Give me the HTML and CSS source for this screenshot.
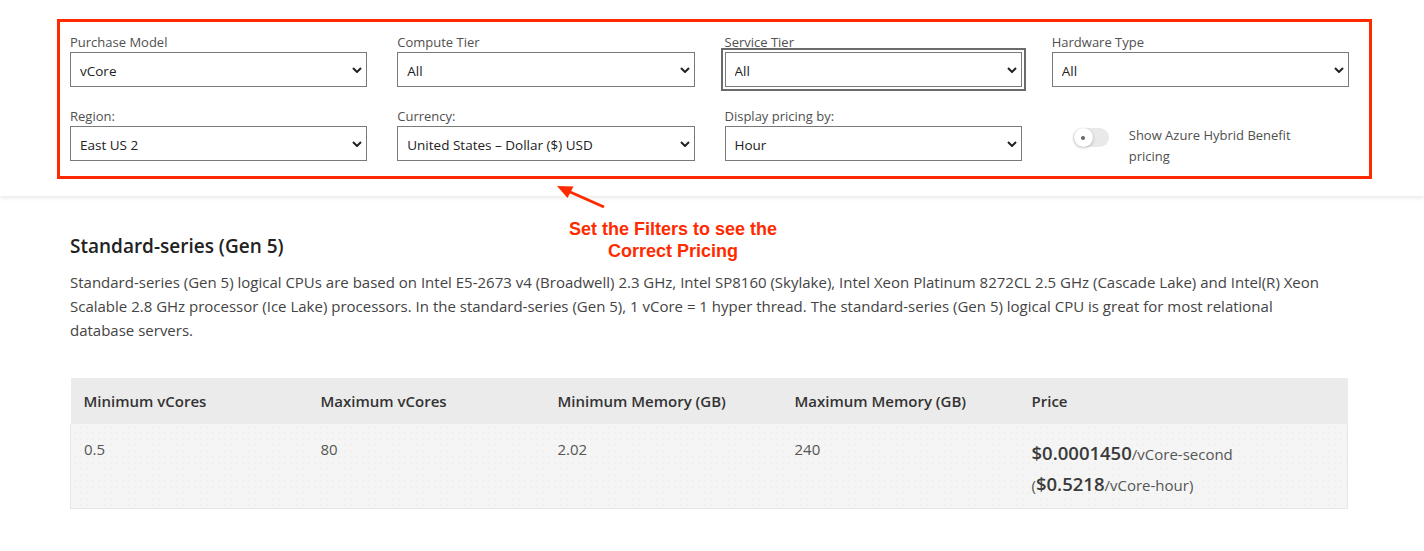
FILE: index.html
```html
<!DOCTYPE html>
<html lang="en">
<head>
  <meta charset="UTF-8" />
  <title>Azure SQL Database pricing</title>
  <link rel="stylesheet" href="styles.css">
</head>
<body>
  <div class="page">

    <!-- filter bar -->
    <div class="filters-bar">
      <div class="filters-frame">
        <div class="filters">
          <div class="field">
            <label>Purchase Model</label>
            <div class="select-wrap">
              <select><option>vCore</option></select>
              <svg class="chev" viewBox="0 0 10 6"><path d="M1 1l4 4 4-4" /></svg>
            </div>
          </div>
          <div class="field">
            <label>Compute Tier</label>
            <div class="select-wrap">
              <select><option>All</option></select>
              <svg class="chev" viewBox="0 0 10 6"><path d="M1 1l4 4 4-4" /></svg>
            </div>
          </div>
          <div class="field">
            <label>Service Tier</label>
            <div class="select-wrap">
              <select class="is-focused"><option>All</option></select>
              <svg class="chev" viewBox="0 0 10 6"><path d="M1 1l4 4 4-4" /></svg>
            </div>
          </div>
          <div class="field">
            <label>Hardware Type</label>
            <div class="select-wrap">
              <select><option>All</option></select>
              <svg class="chev" viewBox="0 0 10 6"><path d="M1 1l4 4 4-4" /></svg>
            </div>
          </div>

          <div class="field">
            <label>Region:</label>
            <div class="select-wrap">
              <select><option>East US 2</option></select>
              <svg class="chev" viewBox="0 0 10 6"><path d="M1 1l4 4 4-4" /></svg>
            </div>
          </div>
          <div class="field">
            <label>Currency:</label>
            <div class="select-wrap">
              <select><option>United States – Dollar ($) USD</option></select>
              <svg class="chev" viewBox="0 0 10 6"><path d="M1 1l4 4 4-4" /></svg>
            </div>
          </div>
          <div class="field">
            <label>Display pricing by:</label>
            <div class="select-wrap">
              <select><option>Hour</option></select>
              <svg class="chev" viewBox="0 0 10 6"><path d="M1 1l4 4 4-4" /></svg>
            </div>
          </div>
          <div class="field toggle-field">
            <span class="switch"><span class="knob"></span></span>
            <span class="toggle-label">Show Azure Hybrid Benefit pricing</span>
          </div>
        </div>
      </div>
    </div>

    <!-- callout -->
    <svg class="callout-arrow" width="60" height="35" viewBox="0 0 60 35">
      <line x1="54" y1="29" x2="19" y2="13.5" />
      <polygon points="7,8 23.5,8.5 17.5,20" />
    </svg>
    <div class="callout-text">Set the Filters to see the<br>Correct Pricing</div>

    <!-- series -->
    <div class="content">
      <h2>Standard-series (Gen 5)</h2>
      <p>Standard-series (Gen 5) logical CPUs are based on Intel E5-2673 v4 (Broadwell) 2.3 GHz, Intel SP8160 (Skylake), Intel Xeon Platinum 8272CL 2.5 GHz (Cascade Lake) and Intel(R) Xeon Scalable 2.8 GHz processor (Ice Lake) processors. In the standard-series (Gen 5), 1 vCore = 1 hyper thread. The standard-series (Gen 5) logical CPU is great for most relational database servers.</p>

      <table class="price-table">
        <colgroup>
          <col class="col-std"><col class="col-std"><col class="col-std"><col class="col-std"><col>
        </colgroup>
        <thead>
          <tr>
            <th>Minimum vCores</th>
            <th>Maximum vCores</th>
            <th>Minimum Memory (GB)</th>
            <th>Maximum Memory (GB)</th>
            <th>Price</th>
          </tr>
        </thead>
        <tbody>
          <tr>
            <td>0.5</td>
            <td>80</td>
            <td>2.02</td>
            <td>240</td>
            <td class="price">
              <span class="amount">$0.0001450</span>/vCore-second<br>
              (<span class="amount">$0.5218</span>/vCore-hour)
            </td>
          </tr>
        </tbody>
      </table>
    </div>

  </div>
</body>
</html>
```

FILE: styles.css
```css
body {
  margin: 0;
  font-family: "Segoe UI", "Open Sans", sans-serif;
  color: #444;
  background: white;
}

.page {
  position: relative;
  min-height: 551px;
}

/* ---- filter bar ---- */

.filters-bar {
  background: white;
  padding: 19px 0 17px;
  box-shadow: 0 2px 4px rgba(0,0,0,0.09);
}

.filters-frame {
  margin-left: 57px;
  width: 1315px;
  box-sizing: border-box;
  border: 3px solid #ff2a00;
  padding: 12px 20px 15px 10px;
}

.filters {
  display: grid;
  grid-template-columns: repeat(4, 1fr);
  column-gap: 30px;
  row-gap: 21px;
}

.field label {
  display: block;
  font-size: 13px;
  line-height: 17px;
  margin-bottom: 1px;
  color: #505050;
}

.select-wrap {
  position: relative;
}

select {
  appearance: none;
  -webkit-appearance: none;
  display: block;
  width: 100%;
  height: 35px;
  box-sizing: border-box;
  border: 1px solid #7a7a7a;
  border-radius: 0;
  background: white;
  padding: 2px 30px 0 9px;
  font-family: inherit;
  font-size: 13.5px;
  color: #222;
}

select.is-focused {
  outline: 2px solid #6b6b6b;
  outline-offset: 2px;
}

.chev {
  position: absolute;
  right: 5px;
  top: 15px;
  width: 10px;
  height: 6px;
  fill: none;
  stroke: #222;
  stroke-width: 2;
}

/* the label wraps below the select line, so the cell keeps the row height */
.toggle-field {
  display: flex;
  align-items: flex-start;
  height: 53px;
  box-sizing: border-box;
  padding-top: 17px;
}

.switch {
  position: relative;
  flex: none;
  width: 36px;
  height: 19px;
  margin: 3px 0 0 21px;
  border-radius: 10px;
  background: #e9e9e9;
}

.knob {
  position: absolute;
  left: 1px;
  top: 0;
  width: 19px;
  height: 19px;
  border-radius: 50%;
  background: white;
  box-shadow: 0 1px 3px rgba(0,0,0,0.25);
}

.knob::after {
  content: "";
  position: absolute;
  left: 7.5px;
  top: 7.5px;
  width: 4px;
  height: 4px;
  border-radius: 50%;
  background: #666;
}

.toggle-label {
  margin-left: 20px;
  max-width: 175px;
  font-size: 13px;
  line-height: 21px;
  color: #505050;
}

/* ---- callout ---- */

.callout-arrow {
  position: absolute;
  left: 550px;
  top: 178px;
}

.callout-arrow line {
  stroke: #ff2a00;
  stroke-width: 3;
}

.callout-arrow polygon {
  fill: #ff2a00;
}

.callout-text {
  position: absolute;
  left: 553px;
  top: 218px;
  width: 240px;
  text-align: center;
  font-family: "Liberation Sans", Arial, sans-serif;
  font-weight: bold;
  font-size: 18px;
  line-height: 22px;
  color: #ff2a00;
}

/* ---- series content ---- */

.content {
  width: 1278px;
  margin-left: 70px;
  padding-top: 37px;
}

h2 {
  margin: 0;
  font-size: 19px;
  line-height: 26px;
  font-weight: 600;
  color: #222;
}

p {
  max-width: 1255px;
  margin: 11px 0 0;
  font-size: 15px;
  line-height: 24px;
  color: #444;
}

.price-table {
  width: 100%;
  margin-top: 36px;
  border-collapse: collapse;
  table-layout: fixed;
}

.col-std {
  width: 237px;
}

.price-table th {
  background: #ebebeb;
  height: 46px;
  padding: 0 13px;
  text-align: left;
  font-size: 15px;
  font-weight: 600;
  color: #333;
}

.price-table tbody tr {
  background-color: #f4f5f4;
  background-image: radial-gradient(#e9eae9 0.6px, transparent 0.8px);
  background-size: 6px 6px;
  border: 1px solid #e6e6e6;
  border-top: none;
}

.price-table td {
  padding: 13px 13px 8px;
  vertical-align: top;
  font-size: 15px;
  line-height: 24px;
  color: #555;
}

.price-table td.price {
  padding-top: 14px;
  line-height: 30px;
}

.amount {
  font-size: 18.5px;
  font-weight: 600;
  color: #3a3a3a;
}
```
